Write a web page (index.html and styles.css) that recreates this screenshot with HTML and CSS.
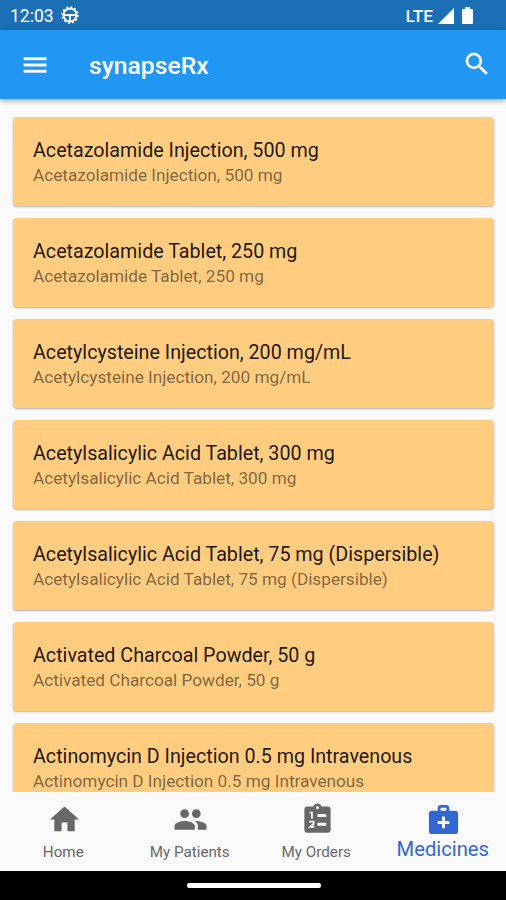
FILE: index.html
```html
<!DOCTYPE html>
<html lang="en">
<head>
<meta charset="utf-8">
<title>synapseRx</title>
<link rel="stylesheet" href="styles.css">
</head>
<body>
<div class="screen">
  <div class="status">
    <span class="clock">12:03</span>
    <svg class="gear" viewBox="0 0 18 18"><circle cx="9" cy="9" r="6.500" fill="none" stroke="#fff" stroke-width="2"/><circle cx="9" cy="9" r="8" fill="none" stroke="#fff" stroke-width="1.400" stroke-dasharray="2.094 2.094"/><path d="M3 8h12v2h-5v5H8v-5H3z" fill="#fff"/></svg>
    <span class="lte">LTE</span>
    <svg class="signal" viewBox="0 0 16 16"><path d="M16 0v16H0z" fill="#fff"/></svg>
    <svg class="battery" viewBox="0 0 11 17"><path d="M3 0h5v2h2q1 0 1 1v13q0 1-1 1H1q-1 0-1-1V3q0-1 1-1h2z" fill="#fff"/></svg>
  </div>
  <header class="appbar">
    <svg class="icon" viewBox="0 0 24 24"><path d="M3 18h18v-2H3v2zm0-5h18v-2H3v2zm0-7v2h18V6H3z" stroke="#fff" stroke-width=".3"/></svg>
    <h1 class="brand">synapseRx</h1>
    <svg class="icon search" viewBox="0 0 24 24"><path d="M15.5 14h-.79l-.28-.27A6.47 6.47 0 0 0 16 9.5 6.5 6.5 0 1 0 9.5 16c1.61 0 3.09-.59 4.23-1.57l.27.28v.79l5 4.99L20.49 19l-4.99-5zm-6 0C7.01 14 5 11.99 5 9.5S7.01 5 9.5 5 14 7.01 14 9.5 11.99 14 9.5 14z" stroke="#fff" stroke-width=".2"/></svg>
  </header>
  <main class="list">
    <article class="card"><h2 class="name">Acetazolamide Injection, 500 mg</h2><p class="detail">Acetazolamide Injection, 500 mg</p></article>
    <article class="card"><h2 class="name">Acetazolamide Tablet, 250 mg</h2><p class="detail">Acetazolamide Tablet, 250 mg</p></article>
    <article class="card"><h2 class="name">Acetylcysteine Injection, 200 mg/mL</h2><p class="detail">Acetylcysteine Injection, 200 mg/mL</p></article>
    <article class="card"><h2 class="name">Acetylsalicylic Acid Tablet, 300 mg</h2><p class="detail">Acetylsalicylic Acid Tablet, 300 mg</p></article>
    <article class="card"><h2 class="name">Acetylsalicylic Acid Tablet, 75 mg (Dispersible)</h2><p class="detail">Acetylsalicylic Acid Tablet, 75 mg (Dispersible)</p></article>
    <article class="card"><h2 class="name">Activated Charcoal Powder, 50 g</h2><p class="detail">Activated Charcoal Powder, 50 g</p></article>
    <article class="card"><h2 class="name">Actinomycin D Injection 0.5 mg Intravenous</h2><p class="detail">Actinomycin D Injection 0.5 mg Intravenous</p></article>
  </main>
  <nav class="tabs">
    <a class="tab"><svg class="tab-icon" viewBox="0 0 24 24"><path d="M10 20v-6h4v6h5v-8h3L12 3 2 12h3v8z"/></svg><span class="label">Home</span></a>
    <a class="tab"><svg class="tab-icon" viewBox="0 0 24 24"><path d="M16 11c1.660 0 2.990-1.340 2.990-3S17.660 5 16 5s-3 1.340-3 3 1.340 3 3 3zm-8 0c1.660 0 2.990-1.340 2.990-3S9.660 5 8 5 5 6.340 5 8s1.340 3 3 3zm0 2c-2.330 0-7 1.170-7 3.500V19h14v-2.500c0-2.330-4.670-3.500-7-3.500zm8 0c-.29 0-.62.02-.97.05 1.160.84 1.970 1.970 1.970 3.450V19h6v-2.500c0-2.330-4.670-3.500-7-3.500z"/></svg><span class="label">My Patients</span></a>
    <a class="tab"><svg class="tab-icon" viewBox="0 0 24 24"><path d="M19 3h-4.180A3 3 0 0 0 9.180 3H5a2 2 0 0 0-2 2v14a2 2 0 0 0 2 2h14a2 2 0 0 0 2-2V5a2 2 0 0 0-2-2z"/><g fill="#fafafa"><circle cx="12" cy="3.900" r="1"/><path d="M12 8.200h6v2h-6zM12 14.200h6v2h-6z"/></g><path d="M6.600 7.300H8.200V11.500M6.300 13.500h3v1.600L7 17.100h2.800" fill="none" stroke="#fafafa" stroke-width="1.200"/></svg><span class="label">My Orders</span></a>
    <a class="tab active"><svg class="tab-icon" viewBox="0 0 24 24"><path fill-rule="evenodd" d="M20 6h-4V4c0-1.100-.9-2-2-2h-4c-1.100 0-2 .9-2 2v2H4c-1.100 0-2 .9-2 2v12c0 1.100.9 2 2 2h16c1.100 0 2-.9 2-2V8c0-1.100-.9-2-2-2zM10 4h4v2h-4V4zm6 11h-3v3h-2v-3H8v-2h3v-3h2v3h3v2z"/></svg><span class="label">Medicines</span></a>
  </nav>
  <div class="gesture"><div class="pill"></div></div>
</div>
</body>
</html>
```
FILE: styles.css
```css
* { box-sizing: border-box; }
body { margin: 0; font-family: Roboto, "Liberation Sans", sans-serif; }
h1, h2, p { margin: 0; font-weight: 400; }
.screen { width: 506px; height: 900px; display: flex; flex-direction: column; overflow: hidden; background: #fafafa; }
.status { height: 30px; flex: none; display: flex; align-items: center; padding: 1px 33px 0 10px; background: #1a6fb5; color: #fff; font-size: 17.500px; }
.gear { width: 18px; height: 18px; margin: -1px 0 0 7px; overflow: visible; }
.lte { margin-left: auto; font-size: 17.300px; font-weight: 500; }
.signal { width: 16px; height: 16px; margin-left: 5px; }
.battery { width: 11px; height: 17px; margin-left: 8px; }
.appbar { height: 69px; flex: none; display: flex; align-items: center; padding: 0 14px 0 20px; background: #2196f3; color: #fff; box-shadow: 0 2px 5px rgba(0, 0, 0, .32); position: relative; z-index: 1; }
.icon { width: 30px; height: 30px; fill: #fff; }
.brand { margin: 2px 0 0 39px; font-size: 24.700px; font-weight: 500; line-height: 30px; }
.search { margin-left: auto; margin-top: -1px; }
.list { flex: 1; min-height: 0; overflow: hidden; display: flex; flex-direction: column; gap: 12px; padding: 18.300px 12px 0 13px; }
.card { flex: none; height: 89px; padding: 20.300px 20px 0; border-radius: 4px; background: #ffcc80; box-shadow: 0 1px 2px rgba(0, 0, 0, .3); white-space: nowrap; }
.name { font-size: 19.700px; line-height: 26px; color: rgba(0, 0, 0, .9); }
.detail { font-size: 17.200px; line-height: 22px; color: rgba(0, 0, 0, .52); }
.tabs { height: 79px; flex: none; display: grid; grid-template-columns: repeat(4, 1fr); background: #fafafa; }
.tab { display: flex; flex-direction: column; align-items: center; padding-top: 10px; color: #686868; }
.tab-icon { width: 35px; height: 35px; margin-left: 2px; fill: currentColor; flex: none; }
.label { margin-top: 5px; font-size: 15.200px; line-height: 20px; }
.active { color: #3367d0; }
.active .label { margin-top: 0; font-size: 20.200px; line-height: 24px; }
.gesture { height: 29px; flex: none; display: flex; justify-content: center; padding: 12px 0 0 1px; background: #000; }
.pill { width: 134px; height: 5px; border-radius: 2px; background: #fff; }
```
